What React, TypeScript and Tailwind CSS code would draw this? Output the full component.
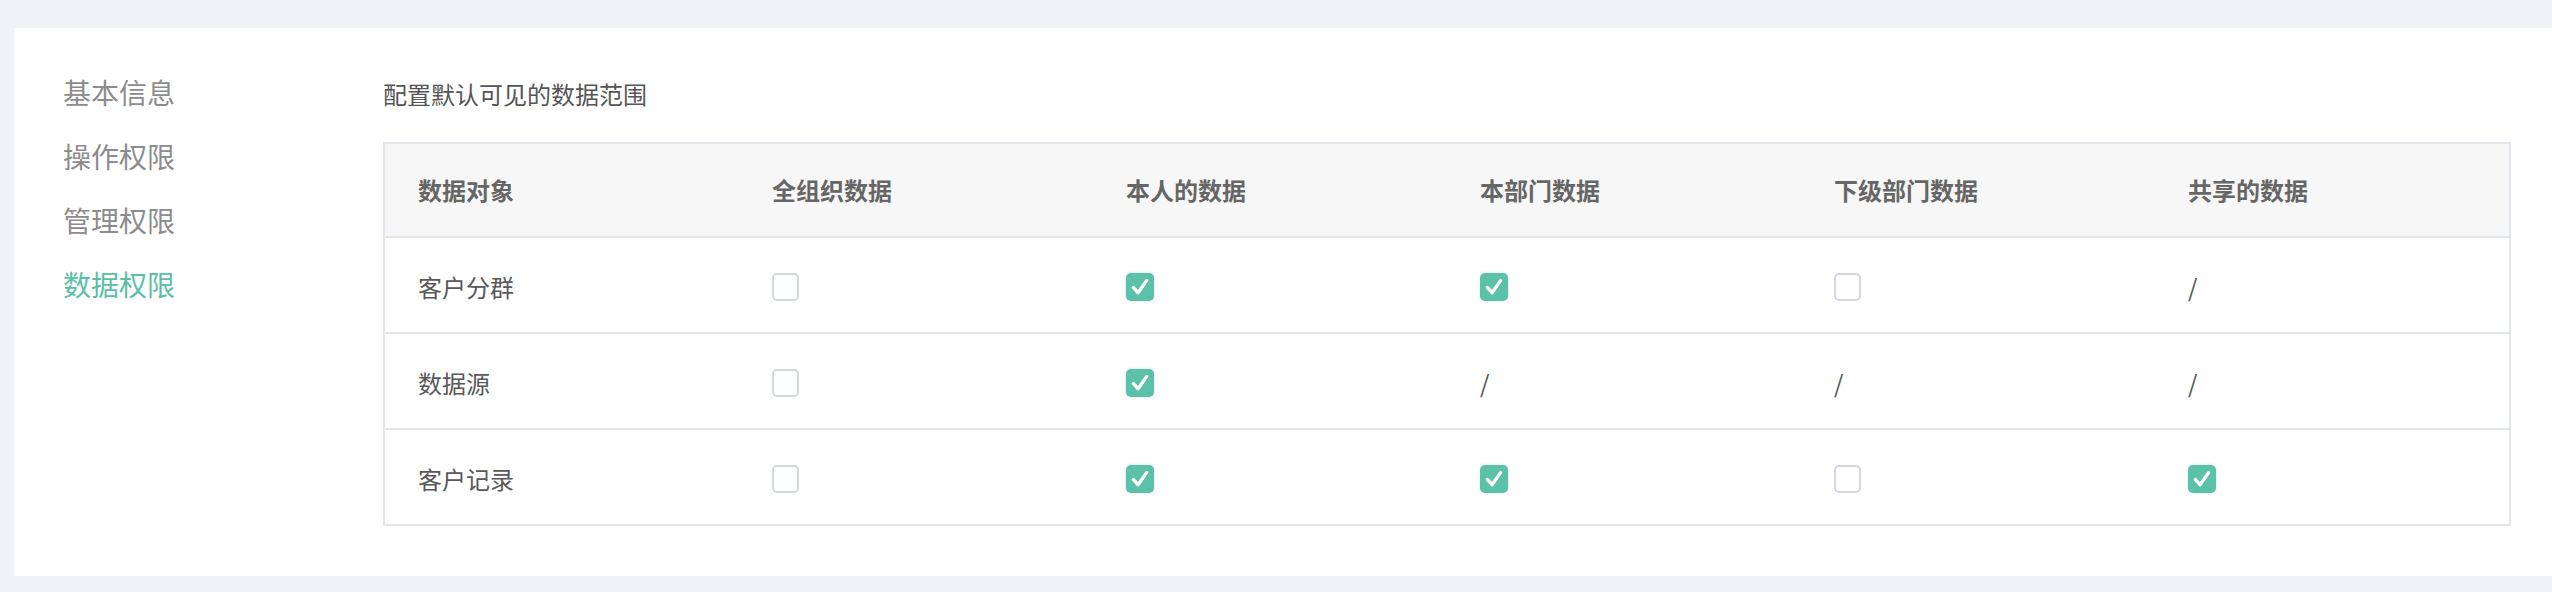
import React from "react";

type Cell = "on" | "off" | "na";

const headers = ["数据对象", "全组织数据", "本人的数据", "本部门数据", "下级部门数据", "共享的数据"];

const rows: { name: string; cells: Cell[] }[] = [
  { name: "客户分群", cells: ["off", "on", "on", "off", "na"] },
  { name: "数据源", cells: ["off", "on", "na", "na", "na"] },
  { name: "客户记录", cells: ["off", "on", "on", "off", "on"] },
];

function Check({ state }: { state: Cell }) {
  if (state === "na") {
    return <span className="text-[24px] text-[#555555]">/</span>;
  }
  if (state === "off") {
    return <span className="block w-[27px] h-[28px] rounded-[5px] border-2 border-[#d3d7e0] bg-white" />;
  }
  return (
    <span className="flex w-[28px] h-[28px] rounded-[5px] bg-[#5bc1a8] items-center justify-center shadow-[0_0_3px_rgba(91,193,168,0.35)]">
      <svg width="22" height="22" viewBox="0 0 20 20" fill="none">
        <path d="M4 10.5 L8.2 15.2 L16 4.2" stroke="white" strokeWidth="3" strokeLinecap="round" strokeLinejoin="round" />
      </svg>
    </span>
  );
}

export default function App() {
  const nav = ["基本信息", "操作权限", "管理权限", "数据权限"];
  return (
    <div
      className="w-[2552px] h-[592px] bg-[#f0f2f5] pt-[28px] pb-[16px] pl-[14px]"
      style={{ fontFamily: '"Noto Sans CJK SC", "Noto Sans", sans-serif' }}
    >
      <div className="h-[548px] bg-white flex">
        <div className="w-[369px] pl-[49px] pt-[32px] flex flex-col">
          {nav.map((n, i) => (
            <div
              key={n}
              className={
                "h-[64px] flex items-center text-[28px] " +
                (i === 3 ? "text-[#5bbfa6]" : "text-[#8c8c8c]")
              }
            >
              {n}
            </div>
          ))}
        </div>
        <div className="flex-1 pt-[50px]">
          <div className="h-[32px] leading-[32px] text-[24px] text-[#555555]">配置默认可见的数据范围</div>
          <div className="mt-[32px] w-[2128px] border-2 border-[#e2e6eb]">
            <div className="grid grid-cols-6 h-[94px] bg-[#f7f7f7] border-b-2 border-[#e2e6eb]">
              {headers.map((h) => (
                <div key={h} className="flex items-center pl-[33px] text-[24px] font-bold text-[#666666]">
                  {h}
                </div>
              ))}
            </div>
            {rows.map((r, ri) => (
              <div
                key={r.name}
                className={
                  "grid grid-cols-6 pt-[4px] " +
                  (ri < rows.length - 1 ? "h-[96px] border-b-2 border-[#e2e6eb]" : "h-[94px]")
                }
              >
                <div className="flex items-center pl-[33px] text-[24px] text-[#595959]">{r.name}</div>
                {r.cells.map((c, ci) => (
                  <div key={ci} className="flex items-center pl-[33px]">
                    <Check state={c} />
                  </div>
                ))}
              </div>
            ))}
          </div>
        </div>
      </div>
    </div>
  );
}
